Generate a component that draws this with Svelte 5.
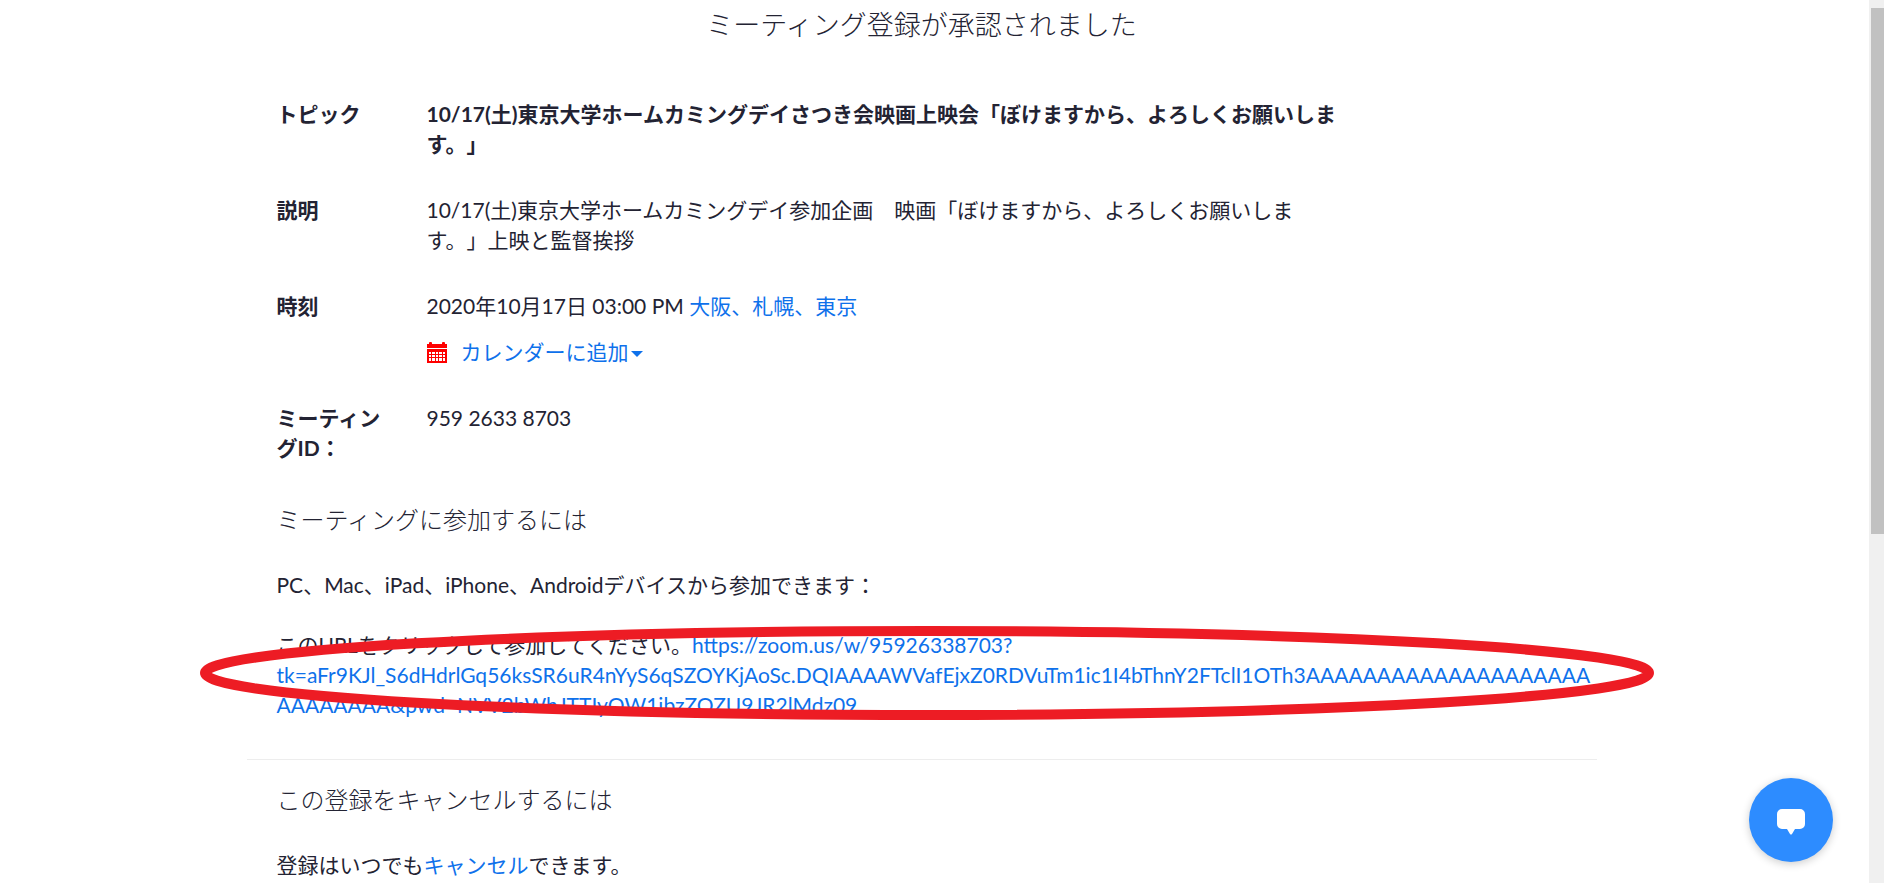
<script lang="ts">
    const topic = '10/17(土)東京大学ホームカミングデイさつき会映画上映会「ぼけますから、よろしくお願いします。」';
    const description = '10/17(土)東京大学ホームカミングデイ参加企画　映画「ぼけますから、よろしくお願いします。」上映と監督挨拶';
    const joinUrl = 'https://zoom.us/w/95926338703?tk=aFr9KJl_S6dHdrlGq56ksSR6uR4nYyS6qSZOYKjAoSc.DQIAAAAWVafEjxZ0RDVuTm1ic1I4bThnY2FTclI1OTh3AAAAAAAAAAAAAAAAAAAAAAAAAAAA&pwd=NVV2bWhJTTIyQW1jbzZOZU9JR2lMdz09';
</script>

<main class="page">
    <div class="content">
        <h1>ミーティング登録が承認されました</h1>

        <dl class="details">
            <dt>トピック</dt>
            <dd class="topic">{topic}</dd>

            <dt>説明</dt>
            <dd>{description}</dd>

            <dt>時刻</dt>
            <dd>
                <div>2020年10月17日 03:00 PM <a href="#timezone">大阪、札幌、東京</a></div>
                <div class="calendar">
                    <svg class="calendar-icon" viewBox="0 0 20 21" aria-hidden="true">
                        <path fill="#f00" d="M0 2h2V1q0-1 1-1h1q1 0 1 1v1h10V1q0-1 1-1h1q1 0 1 1v1h2v4H0zM0 7h20v14H0z" />
                        <path fill="#fff" d="M2 10h2v2H2zm3 0h3v2H5zm4 0h2v2H9zm3 0h3v2h-3zm4 0h2v2h-2zM2 13h2v2H2zm3 0h3v2H5zm4 0h2v2H9zm3 0h3v2h-3zm4 0h2v2h-2zM2 16h2v3H2zm3 0h3v3H5zm4 0h2v3H9zm3 0h3v3h-3zm4 0h2v3h-2z" />
                    </svg>
                    <button type="button" class="calendar-button">カレンダーに追加<span class="caret"></span></button>
                </div>
            </dd>

            <dt>ミーティングID：</dt>
            <dd>959 2633 8703</dd>
        </dl>

        <section class="join">
            <h2>ミーティングに参加するには</h2>
            <p>PC、Mac、iPad、iPhone、Androidデバイスから参加できます：</p>
            <div class="join-link">
                <p>このURLをクリックして参加してください。<a href={joinUrl}>{joinUrl}</a></p>
                <svg class="highlight" viewBox="0 0 1454 94" preserveAspectRatio="none" aria-hidden="true">
                    <ellipse cx="727" cy="47" rx="722" ry="42" fill="none" stroke="#ed1c24" stroke-width="10" />
                </svg>
            </div>
        </section>

        <section class="cancel">
            <h2>この登録をキャンセルするには</h2>
            <p>登録はいつでも<a href="#cancel">キャンセル</a>できます。</p>
        </section>
    </div>
</main>

<button type="button" class="chat" aria-label="チャット">
    <svg viewBox="0 0 28 26" aria-hidden="true">
        <path fill="#fff" d="M5 0h18a5 5 0 0 1 5 5v10a5 5 0 0 1-5 5h-5l-3 5q-1 1-2 0l-3-5H5a5 5 0 0 1-5-5V5a5 5 0 0 1 5-5z" />
    </svg>
</button>

<div class="scrollbar" aria-hidden="true">
    <div class="thumb"></div>
</div>

<style>
    :global(body) {
        background: #fff;
        color: #232333;
        font-family: Lato, "Noto Sans CJK JP", sans-serif;
        font-size: 21px;
        line-height: 30px;
        text-spacing-trim: space-all;
        overflow: hidden;
    }

    .page {
        padding: 10px 41px 0 0;
    }

    .content {
        max-width: 1350px;
        margin: 0 auto;
    }

    h1,
    h2 {
        margin: 0;
        font-size: 24px;
        font-weight: 300;
    }

    h1 {
        font-size: 27px;
        text-align: center;
    }

    p {
        margin: 0;
    }

    a {
        color: #0e71eb;
        text-decoration: none;
    }

    .details {
        display: grid;
        grid-template-columns: 120px minmax(0, 920px);
        gap: 36px 30px;
        margin: 59px 0 0;
        padding-left: 30px;
    }

    dt,
    .topic {
        font-weight: 700;
    }

    dd {
        margin: 0;
    }

    .calendar {
        display: flex;
        align-items: center;
        gap: 14px;
        margin-top: 16px;
    }

    .calendar-icon {
        width: 20px;
        height: 21px;
    }

    .calendar-button {
        display: flex;
        align-items: center;
        gap: 2px;
        padding: 0;
        border: none;
        background: none;
        color: #0e71eb;
        font: inherit;
        cursor: pointer;
    }

    .caret {
        margin-top: 4px;
        border: 6px solid transparent;
        border-top-color: #0e71eb;
        border-bottom: none;
    }

    .join {
        display: flex;
        flex-direction: column;
        padding: 42px 0 39px 30px;
        border-bottom: 1px solid #ededed;
    }

    h2 {
        margin-bottom: 35px;
    }

    .join-link {
        position: relative;
        margin-top: 30px;
        overflow-wrap: anywhere;
    }

    .highlight {
        position: absolute;
        top: -4px;
        left: -77px;
        width: calc(100% + 134px);
        height: 94px;
        pointer-events: none;
    }

    .cancel {
        padding: 25px 0 0 30px;
    }

    .chat {
        position: fixed;
        right: 51px;
        bottom: 21px;
        display: flex;
        align-items: center;
        justify-content: center;
        width: 84px;
        height: 84px;
        padding: 4px 0 0;
        border: none;
        border-radius: 50%;
        background: #2d8cff;
        box-shadow: 0 2px 8px rgba(0, 0, 0, 0.2);
        cursor: pointer;
    }

    .chat svg {
        width: 28px;
        height: 26px;
    }

    .scrollbar {
        position: fixed;
        top: 0;
        right: 0;
        bottom: 0;
        width: 15px;
        background: #f0f0f0;
    }

    .thumb {
        height: 526px;
        margin: 8px 0 0 2px;
        background: #c1c1c1;
    }
</style>
